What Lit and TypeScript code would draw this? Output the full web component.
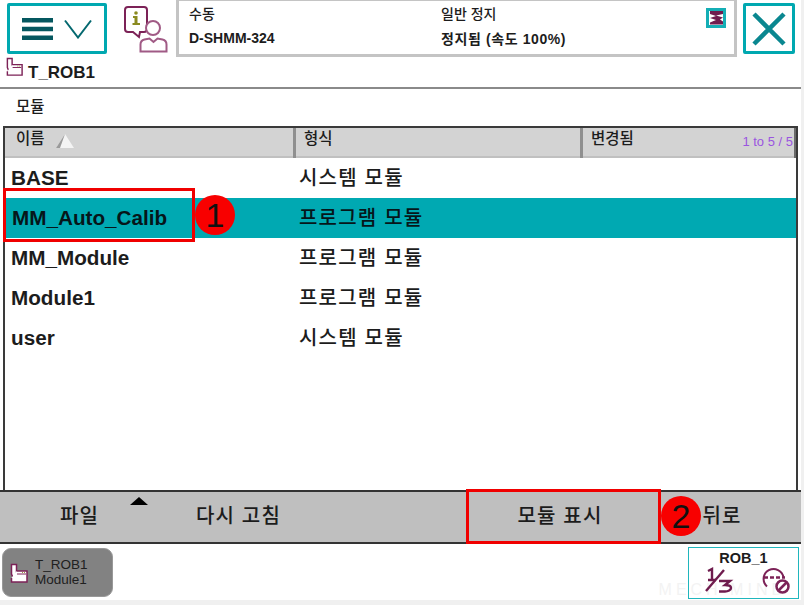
import { LitElement, html, css, svg } from "lit";
import { customElement } from "lit/decorators.js";

const rows = [
  ["BASE", "시스템 모듈", false],
  ["MM_Auto_Calib", "프로그램 모듈", true],
  ["MM_Module", "프로그램 모듈", false],
  ["Module1", "프로그램 모듈", false],
  ["user", "시스템 모듈", false],
] as const;

const taskIcon = svg`
  <path d="M2.500 1.500h5v9.500l-1.200 3h-2.600l-1.200-3z" fill="#fff" stroke="#7c2257" stroke-width="1.500"/>
  <path d="M7.500 8h10.500v11h-15.500v-4" fill="#fff" stroke="#7c2257" stroke-width="1.500"/>
  <path d="M8 11h9" stroke="#7c2257" stroke-width="1"/>
  <path d="M13 9.500h1M15 9.500h1" stroke="#9a9a40" stroke-width="1"/>`;

@customElement("app-root")
export class AppRoot extends LitElement {
  static styles = css`
    :host {
      display: block;
      width: 804px;
      height: 605px;
      background: #f0f0f0;
      overflow: hidden;
      font-family: "Liberation Sans", "Noto Sans CJK KR", sans-serif;
      color: #1c1c1c;
    }
    .screen {
      position: relative;
      width: 801px;
      height: 600px;
      background: #fff;
      display: flex;
      flex-direction: column;
    }
    .top {
      height: 56px;
      display: flex;
      align-items: flex-start;
      padding-left: 7px;
      box-sizing: border-box;
      flex: none;
    }
    .tbtn {
      box-sizing: border-box;
      border: 3px solid #00a8b0;
      border-radius: 2px;
      margin-top: 3px;
      display: flex;
      align-items: center;
      justify-content: center;
      background: #fff;
      flex: none;
    }
    .menu { width: 100px; height: 51px; gap: 11px; }
    .close { width: 52px; height: 51px; margin-left: 6px; }
    .info { margin: 6px 8px 0 17px; display: block; flex: none; }
    .status {
      box-sizing: border-box;
      width: 561px;
      height: 57px;
      border: 3px solid #c4c4c4;
      border-top-width: 1px;
      padding: 0 0 0 10px;
      display: grid;
      grid-template-columns: 252px 1fr;
      grid-template-rows: 24px 26px;
      font-size: 14px;
      align-items: center;
      position: relative;
      flex: none;
    }
    .status b { font-size: 14px; }
    .status .ko { font-weight: 500; }
    .status .ko b { font-weight: 700; letter-spacing: 0.6px; }
    .mini {
      position: absolute;
      right: 8px;
      top: 7px;
      display: block;
    }
    .task {
      height: 31px;
      border-bottom: 2px solid #8a8a8a;
      display: flex;
      align-items: flex-start;
      padding-left: 5px;
      gap: 4px;
      font-size: 17px;
      font-weight: 700;
      flex: none;
    }
    .task span { margin-top: 7px; line-height: 19px; }
    .task svg { margin-top: 1px; display: block; }
    .crumb {
      height: 37px;
      padding-left: 16px;
      font-size: 15.500px;
      font-weight: 500;
      line-height: 36px;
      flex: none;
    }
    .table {
      margin-left: 3px;
      width: 795px;
      height: 364px;
      box-sizing: border-box;
      border: 2px solid #3a3a3a;
      border-bottom: none;
      display: flex;
      flex-direction: column;
      flex: none;
    }
    .head {
      height: 30px;
      background: #d3d3d3;
      display: grid;
      grid-template-columns: 291px 287px 1fr;
      flex: none;
    }
    .th {
      border-right: 3px solid #8f8f8f;
      box-shadow: inset 0 -2px 0 #c0c0c0;
      padding-left: 11px;
      font-size: 15.500px;
      font-weight: 500;
      line-height: 22px;
      display: flex;
      align-items: flex-start;
      gap: 10px;
      position: relative;
    }
    .th svg { margin-top: 5px; display: block; }
    .th:nth-child(2) { padding-left: 8px; }
    .th:nth-child(3) { border-right: 2px solid #6a6a6a; padding-left: 8px; }
    .count {
      position: absolute;
      right: 1px;
      top: 3px;
      font-size: 13px;
      font-weight: 400;
      color: #9a55e0;
    }
    .row {
      height: 40px;
      display: grid;
      grid-template-columns: 288px 1fr;
      align-items: center;
      padding-left: 6px;
      font-size: 20.700px;
      font-weight: 700;
      box-sizing: border-box;
    }
    .row.sel { background: #00a9b2; color: #06161a; }
    .row.sel .name { padding-left: 1px; }
    .row .type {
      font-size: 20px;
      font-weight: 500;
      letter-spacing: 1.200px;
      padding-bottom: 3px;
    }
    .toolbar {
      box-sizing: border-box;
      height: 54px;
      background: #bfbfbf;
      border-top: 2px solid #333;
      border-bottom: 2px solid #333;
      padding-bottom: 5px;
      position: relative;
      display: grid;
      grid-template-columns: 157px 163px 145px 190px 1fr;
      align-items: center;
      font-size: 20px;
      font-weight: 500;
      letter-spacing: 1.200px;
      flex: none;
    }
    .tool { text-align: center; }
    .tool.b1 { padding-left: 2px; }
    .tool.back { padding-right: 12px; }
    .caret {
      position: absolute;
      left: 130px;
      top: 5px;
      width: 0;
      height: 0;
      border-left: 9px solid transparent;
      border-right: 9px solid transparent;
      border-bottom: 8px solid #000;
    }
    .bottom {
      flex: 1;
      display: flex;
      justify-content: space-between;
      align-items: flex-start;
      padding: 4px 2px 0;
      position: relative;
      overflow: hidden;
    }
    .chip {
      width: 111px;
      height: 49px;
      box-sizing: border-box;
      background: #828282;
      border: 1px solid #999;
      border-radius: 9px;
      display: flex;
      align-items: center;
      gap: 6px;
      padding-left: 6px;
      font-size: 13.500px;
      line-height: 14.500px;
      color: #202020;
    }
    .chip svg { display: block; flex: none; margin-top: 3px; }
    .rob {
      width: 111px;
      height: 52px;
      box-sizing: border-box;
      border: 1.500px solid #1fb6bd;
      display: flex;
      flex-direction: column;
      align-items: center;
      font-size: 14.500px;
      font-weight: 700;
      margin-top: -1px;
      position: relative;
    }
    .rob div { margin-top: 2px; line-height: 16px; }
    .rob svg { display: block; overflow: visible; }
    .mark {
      position: absolute;
      right: 14px;
      bottom: 1px;
      font-size: 16px;
      line-height: 18px;
      letter-spacing: 4px;
      color: #f3f3f3;
    }
    .box {
      position: absolute;
      box-sizing: border-box;
      border: 3px solid #f00000;
    }
    .b-a { left: 3px; top: 188px; width: 192px; height: 54px; }
    .b-b { left: 466px; top: 489px; width: 195px; height: 55px; }
    .badge {
      position: absolute;
      width: 40px;
      height: 40px;
      border-radius: 50%;
      background: #f80000;
      color: #111;
      font-size: 34px;
      line-height: 40px;
      text-align: center;
      font-weight: 400;
    }
    .n1 { left: 195px; top: 195px; }
    .n2 { left: 661px; top: 496px; }
  `;

  render() {
    return html`
      <div class="screen">
        <div class="top">
          <div class="tbtn menu">
            <svg width="31" height="22" viewBox="0 0 31 22">
              <path d="M0 2.300h31M0 11h31M0 19.700h31" stroke="#04575f" stroke-width="4.500"/>
            </svg>
            <svg width="28" height="20" viewBox="0 0 28 20">
              <path d="M1 1.500l13 17L27 1.500" fill="none" stroke="#04686f" stroke-width="2"/>
            </svg>
          </div>
          <svg class="info" width="44" height="47" viewBox="0 0 44 47">
            <path d="M4 1h16a3 3 0 0 1 3 3v19a3 3 0 0 1-3 3h-4l-1 5-6-5H4a3 3 0 0 1-3-3V4a3 3 0 0 1 3-3z" fill="#fff" stroke="#7c2257" stroke-width="2"/>
            <circle cx="12" cy="7" r="1.800" fill="#8a8a20"/>
            <path d="M9 10h4.500v7H16v2H8.500v-2h2v-5H9z" fill="#8a8a20"/>
            <circle cx="29" cy="22" r="7" fill="#fff" stroke="#a05a85" stroke-width="2"/>
            <path d="M16.500 45.500v-7q0-4 4-5l5-1 4 3.500 4-3.500 5 1q4 1 4 5v7z" fill="#fff" stroke="#a05a85" stroke-width="2"/>
          </svg>
          <div class="status">
            <div class="ko">수동</div>
            <div class="ko">일반 정지</div>
            <b>D-SHMM-324</b>
            <div class="ko"><b>정지됨 (속도 100%)</b></div>
            <svg class="mini" width="20" height="20" viewBox="0 0 20 20">
              <rect width="20" height="20" fill="#14aeb5"/>
              <rect x="3" y="3" width="14" height="14" fill="#fff"/>
              <path d="M4 3h13v3l-7 1.500 7 2-3 2 3 2v3H4v-2l6-2.500-6-2 6-2-6-2z" fill="#6f1c4e"/>
            </svg>
          </div>
          <div class="tbtn close">
            <svg width="36" height="36" viewBox="0 0 36 36">
              <path d="M3 3l30 30M33 3L3 33" stroke="#0a8790" stroke-width="4.500"/>
            </svg>
          </div>
        </div>
        <div class="task">
          <svg width="19" height="21" viewBox="0 0 20 22">${taskIcon}</svg>
          <span>T_ROB1</span>
        </div>
        <div class="crumb">모듈</div>
        <div class="table">
          <div class="head">
            <div class="th">이름
              <svg width="20" height="16" viewBox="0 0 20 16">
                <path d="M10 1l9 14H1z" fill="#f4f4f4"/>
                <path d="M10 1L1 15h4z" fill="#9a9a9a"/>
              </svg>
            </div>
            <div class="th">형식</div>
            <div class="th">변경됨<span class="count">1 to 5 / 5</span></div>
          </div>
          ${rows.map(
            ([name, type, sel]) => html`
              <div class="row ${sel ? "sel" : ""}">
                <span class="name">${name}</span><span class="type">${type}</span>
              </div>`
          )}
        </div>
        <div class="toolbar">
          <div class="tool b1">파일</div>
          <div class="tool">다시 고침</div>
          <div></div>
          <div class="tool">모듈 표시</div>
          <div class="tool back">뒤로</div>
          <div class="caret"></div>
        </div>
        <div class="bottom">
          <div class="mark">MECH MIND</div>
          <div class="chip">
            <svg width="20" height="22" viewBox="0 0 20 22">${taskIcon}</svg>
            <div>T_ROB1<br />Module1</div>
          </div>
          <div class="rob">
            <div>ROB_1</div>
            <svg width="90" height="28" viewBox="0 0 90 28">
              <path d="M9 5l4-2v11M9 14h8" fill="none" stroke="#6f1c4e" stroke-width="2.400"/>
              <path d="M7 25L25 4" stroke="#6f1c4e" stroke-width="2.400"/>
              <path d="M20 15h11l-5 4c3 0 6 1 6 3s-3 3.500-6 3.500h-6" fill="none" stroke="#6f1c4e" stroke-width="2.400"/>
              <path d="M68 20.500a10 10 0 1 1 16.500-9" fill="none" stroke="#7c2257" stroke-width="2"/>
              <path d="M65 11.500h4M71 11.500h4M77 11.500h4M83 11.500h3" stroke="#7c2257" stroke-width="2.500"/>
              <circle cx="83.500" cy="20.500" r="6" fill="#fff" stroke="#7c2257" stroke-width="2.500"/>
              <path d="M79.500 24.500l8-8" stroke="#7c2257" stroke-width="2.500"/>
            </svg>
          </div>
        </div>
        <div class="box b-a"></div>
        <div class="box b-b"></div>
        <div class="badge n1">1</div>
        <div class="badge n2">2</div>
      </div>
    `;
  }
}
